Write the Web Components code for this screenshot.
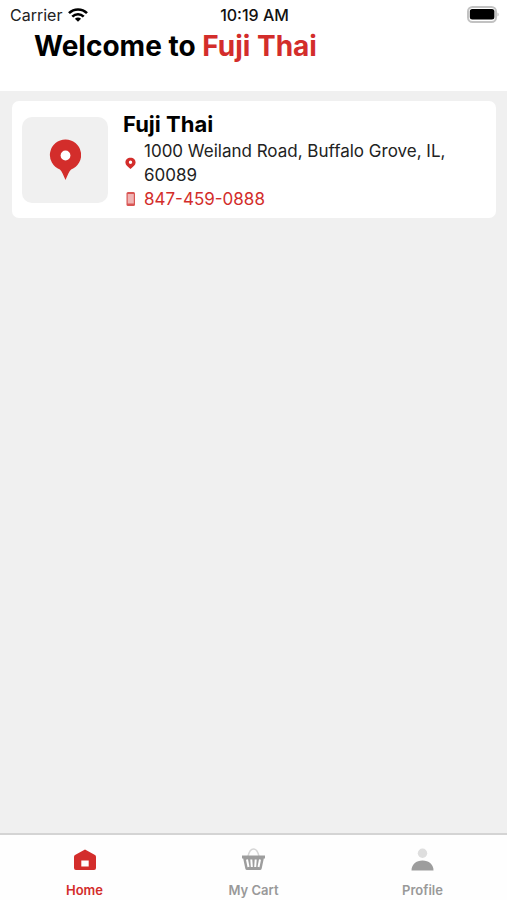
<!DOCTYPE html>
<html lang="en">
<head>
<meta charset="utf-8">
<meta name="viewport" content="width=device-width, initial-scale=1">
<title>Fuji Thai</title>
<style>
  html, body { margin: 0; height: 100%; }
  body { font-family: Inter, "Liberation Sans", sans-serif; color: #000; background: #f0f0f0; }
</style>
</head>
<body>
<app-screen>
  <status-bar slot="top" carrier="Carrier" time="10:19 AM"></status-bar>
  <welcome-header slot="top">Welcome to <span slot="name">Fuji Thai</span></welcome-header>
  <restaurant-card>
    <span slot="name">Fuji Thai</span>
    <span slot="address">1000 Weiland Road, Buffalo Grove, IL, 60089</span>
    <span slot="phone">847-459-0888</span>
  </restaurant-card>
  <tab-bar slot="bottom">
    <tab-item icon="home" active>Home</tab-item>
    <tab-item icon="cart">My Cart</tab-item>
    <tab-item icon="profile">Profile</tab-item>
  </tab-bar>
</app-screen>
<script>
const define = (name, html, setup) => customElements.define(name, class extends HTMLElement {
  constructor() {
    super();
    this.attachShadow({ mode: "open" }).innerHTML = html;
  }
  connectedCallback() { if (setup) setup(this, this.shadowRoot); }
});

define("app-screen", `
  <style>
    :host { display: flex; flex-direction: column; min-height: 100vh; --red: #d32d2b; }
    header { background: #fff; }
    main { flex: 1; padding: 10px 11px 10px 12px; }
  </style>
  <header><slot name="top"></slot></header>
  <main><slot></slot></main>
  <slot name="bottom"></slot>`);

define("status-bar", `
  <style>
    :host { display: grid; grid-template-columns: 1fr auto 1fr; align-items: center; height: 30px;
      padding: 0 8px 0 10px; font-size: 16px; line-height: 30px; color: #222; }
    .left { display: flex; align-items: center; gap: 6px; }
    .time { font-weight: 500; color: #111; }
    .battery { justify-self: end; }
    svg { display: block; }
  </style>
  <div class="left"><span class="carrier"></span>
    <svg width="20" height="14" viewBox="0 0 20 14" fill="none" stroke="#000" stroke-width="2.6" aria-hidden="true">
      <path d="M1 5.2C6 .2 14 .2 19 5.2M4.3 8.6c3.2-3.2 8.2-3.2 11.4 0"/>
      <path fill="#000" stroke="none" d="M10 13.8 6.9 10.7c1.7-1.7 4.5-1.7 6.2 0z"/>
    </svg></div>
  <span class="time"></span>
  <svg class="battery" width="32" height="18" viewBox="0 0 32 18" aria-hidden="true">
    <rect x="1" y="1" width="28" height="15" rx="4.5" fill="#fff" stroke="#c2c2c2" stroke-width="2"/>
    <rect x="2.800" y="3" width="24.600" height="10.500" rx="2.500"/>
    <path d="M30.500 6.500c1.500.8 1.500 3.200 0 4z" fill="#b9b9b9"/>
  </svg>`, (el, root) => {
  root.querySelector(".carrier").textContent = el.getAttribute("carrier");
  root.querySelector(".time").textContent = el.getAttribute("time");
});

define("welcome-header", `
  <style>
    :host { display: block; padding: 0 34px 29px; }
    h1 { margin: 0; font-size: 28px; line-height: 32px; font-weight: 700; }
    ::slotted(span) { color: var(--red); }
  </style>
  <h1><slot></slot><slot name="name"></slot></h1>`);

define("restaurant-card", `
  <style>
    :host { display: flex; align-items: center; gap: 15px; background: #fff; border-radius: 7px; padding: 8px 10px 7px; }
    .thumb { flex: none; width: 86px; height: 86px; border-radius: 10px; background: #f0f0f0;
      display: grid; place-items: center; }
    .info { flex: 1; min-width: 0; }
    h2 { margin: 0; font-size: 22px; line-height: 30px; font-weight: 700; }
    .row { display: flex; align-items: center; gap: 6px; font-size: 17px; line-height: 24px; color: #222; }
    svg { display: block; flex: none; }
    a { color: var(--red); text-decoration: none; }
  </style>
  <div class="thumb">
    <svg width="32" height="42" viewBox="0 0 32 42" aria-hidden="true">
      <path fill="#d32d2b" d="M16.500 .5a15.500 15.500 0 0 1 5.600 30C20 32.500 18.500 36.500 16.500 41 14.500 36.500 13 32.500 10.900 30.500A15.500 15.500 0 0 1 16.500 .5z"/>
      <circle cx="16.500" cy="16.500" r="4.900" fill="#fff"/>
    </svg>
  </div>
  <div class="info">
    <h2><slot name="name"></slot></h2>
    <div class="row">
      <svg width="15" height="16" viewBox="0 0 15 16" aria-hidden="true">
        <path fill="#d32d2b" fill-rule="evenodd" d="M7.500 2.700c3 0 5.100 2 5.100 4.700 0 2.500-2.300 3.700-5.100 6.600-2.800-2.900-5.100-4.100-5.100-6.600 0-2.700 2.100-4.700 5.100-4.700zm0 2.800a1.700 1.700 0 1 0 0 3.400 1.700 1.700 0 0 0 0-3.400z"/>
      </svg>
      <slot name="address"></slot>
    </div>
    <div class="row">
      <svg width="15" height="16" viewBox="0 0 15 16" aria-hidden="true">
        <rect x="3.500" y="1" width="8.500" height="14" rx="1.500" fill="#d85553"/>
        <rect x="4.700" y="3" width="6.100" height="9.500" fill="#f0b4b4"/>
      </svg>
      <a href="tel:8474590888"><slot name="phone"></slot></a>
    </div>
  </div>`);

define("tab-bar", `
  <style>
    :host { display: block; background: #fefefe; border-top: 2px solid #d4d4d4; }
    nav { display: grid; grid-template-columns: repeat(3, 1fr); }
  </style>
  <nav aria-label="Main"><slot></slot></nav>`);

const icons = {
  home: `<path fill="#d32d2b" fill-rule="evenodd" d="M13 2.500 23 8q1 .6 1 2v11q0 2-2 2H4q-2 0-2-2V10q0-1.400 1-2zM9.300 13.500v6h7.400v-6z"/>`,
  cart: `<path d="M7 9.500C8 4.800 10.500 2 12.500 2s4.500 2.800 5.500 7.500" fill="none" stroke="#d6d6d6" stroke-width="1.600"/>
    <path fill="#9d9d9d" d="M1 8.500h23v3h-1.200l-2.100 10q-.3 1.500-1.800 1.500H6.100q-1.500 0-1.800-1.500l-2.100-10H1z"/>
    <path d="m6 12.500 1.500 7.500M10.300 12.500l.5 7.500M14.700 12.500l-.5 7.500M19 12.500 17.500 20" fill="none" stroke="#fff" stroke-width="2"/>`,
  profile: `<circle cx="12.500" cy="6.200" r="4.700" fill="#dedede"/>
    <path fill="#9d9d9d" d="M1.500 23.500c0-6 4.500-10 11-10s11 4 11 10z"/>`
};

define("tab-item", `
  <style>
    :host { display: block; color: #999; }
    :host([active]) { color: var(--red); }
    button { width: 100%; display: flex; flex-direction: column; align-items: center; gap: 9px;
      padding: 12px 0 1px; border: 0; background: none; color: inherit;
      font: 600 13px/18px Inter, "Liberation Sans", sans-serif; }
    svg { display: block; }
  </style>
  <button type="button"><svg width="26" height="25" viewBox="0 0 26 25" aria-hidden="true"></svg><span><slot></slot></span></button>`,
  (el, root) => {
    root.querySelector("svg").innerHTML = icons[el.getAttribute("icon")];
    if (el.hasAttribute("active")) root.querySelector("button").setAttribute("aria-current", "page");
  });
</script>
</body>
</html>
